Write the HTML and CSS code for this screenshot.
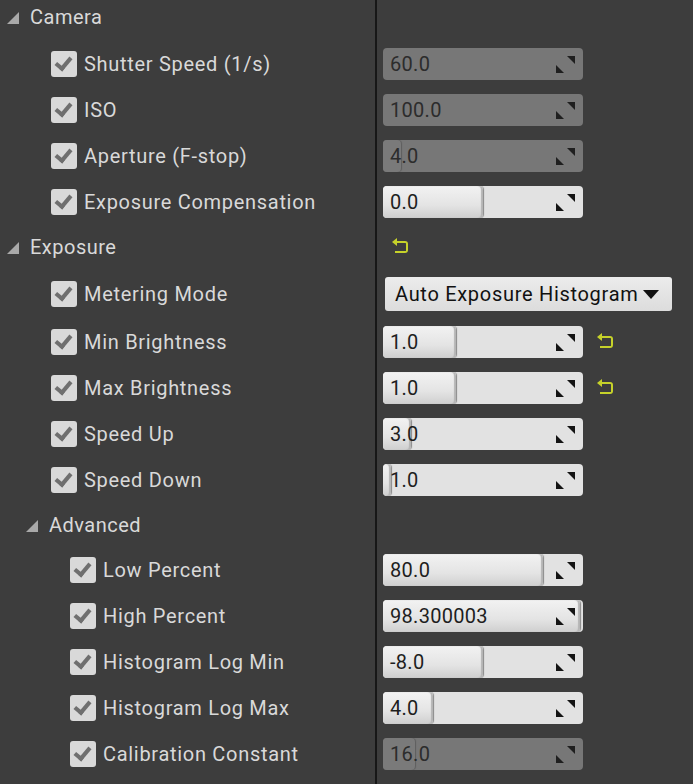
FILE: index.html
```html
<!DOCTYPE html>
<html lang="en">
<head>
  <meta charset="UTF-8" />
  <title>Post Process Settings</title>
  <link rel="stylesheet" href="styles.css">
</head>
<body>
  <div class="panel">

    <div class="row group first">
      <div class="name"><span class="arrow"></span>Camera</div>
      <div class="value"></div>
    </div>

    <div class="row">
      <div class="name"><span class="check"></span>Shutter Speed (1/s)</div>
      <div class="value"><div class="field disabled"><span class="num">60.0</span><span class="spin"></span></div></div>
    </div>
    <div class="row">
      <div class="name"><span class="check"></span>ISO</div>
      <div class="value"><div class="field disabled"><span class="num">100.0</span><span class="spin"></span></div></div>
    </div>
    <div class="row">
      <div class="name"><span class="check"></span>Aperture (F-stop)</div>
      <div class="value"><div class="field disabled"><span class="fill" style="width:9%"></span><span class="num">4.0</span><span class="spin"></span></div></div>
    </div>
    <div class="row">
      <div class="name"><span class="check"></span>Exposure Compensation</div>
      <div class="value"><div class="field"><span class="fill" style="width:50%"></span><span class="num">0.0</span><span class="spin"></span></div></div>
    </div>

    <div class="row group">
      <div class="name"><span class="arrow"></span>Exposure</div>
      <div class="value"><span class="reset head-reset"></span></div>
    </div>

    <div class="row tall">
      <div class="name"><span class="check"></span>Metering Mode</div>
      <div class="value"><div class="combo">Auto Exposure Histogram<span class="caret"></span></div></div>
    </div>
    <div class="row">
      <div class="name"><span class="check"></span>Min Brightness</div>
      <div class="value"><div class="field"><span class="fill" style="width:36.5%"></span><span class="num">1.0</span><span class="spin"></span></div><span class="reset"></span></div>
    </div>
    <div class="row">
      <div class="name"><span class="check"></span>Max Brightness</div>
      <div class="value"><div class="field"><span class="fill" style="width:36.5%"></span><span class="num">1.0</span><span class="spin"></span></div><span class="reset"></span></div>
    </div>
    <div class="row">
      <div class="name"><span class="check"></span>Speed Up</div>
      <div class="value"><div class="field"><span class="fill" style="width:14%"></span><span class="num">3.0</span><span class="spin"></span></div></div>
    </div>
    <div class="row">
      <div class="name"><span class="check"></span>Speed Down</div>
      <div class="value"><div class="field"><span class="fill" style="width:4%"></span><span class="num">1.0</span><span class="spin"></span></div></div>
    </div>

    <div class="row group sub">
      <div class="name"><span class="arrow"></span>Advanced</div>
      <div class="value"></div>
    </div>

    <div class="row sub">
      <div class="name"><span class="check"></span>Low Percent</div>
      <div class="value"><div class="field"><span class="fill" style="width:80%"></span><span class="num">80.0</span><span class="spin"></span></div></div>
    </div>
    <div class="row sub">
      <div class="name"><span class="check"></span>High Percent</div>
      <div class="value"><div class="field"><span class="fill" style="width:98.3%"></span><span class="num">98.300003</span><span class="spin"></span></div></div>
    </div>
    <div class="row sub">
      <div class="name"><span class="check"></span>Histogram Log Min</div>
      <div class="value"><div class="field"><span class="fill" style="width:50%"></span><span class="num">-8.0</span><span class="spin"></span></div></div>
    </div>
    <div class="row sub">
      <div class="name"><span class="check"></span>Histogram Log Max</div>
      <div class="value"><div class="field"><span class="fill" style="width:25%"></span><span class="num">4.0</span><span class="spin"></span></div></div>
    </div>
    <div class="row sub">
      <div class="name"><span class="check"></span>Calibration Constant</div>
      <div class="value"><div class="field disabled"><span class="fill" style="width:16%"></span><span class="num">16.0</span><span class="spin"></span></div></div>
    </div>

  </div>
</body>
</html>
```

FILE: styles.css
```css
body {
  margin: 0;
  background-color: #3d3d3d;
  font-family: Roboto, "Liberation Sans", sans-serif;
  overflow: hidden;
}

/* column splitter drawn behind the rows so it runs to the bottom */
.panel {
  display: flex;
  flex-direction: column;
  height: 784px;
  background: linear-gradient(to right, transparent 375px, #171717 375px, #171717 377px, transparent 377px);
}

.row {
  display: grid;
  grid-template-columns: 377px 1fr;
  height: 46px;
  flex: none;
}
.row.group {
  height: 44px;
}
.row.group.first {
  height: 41px;
}
.row.group.first .name,
.row.group.first .value {
  padding-bottom: 7px;
}
.row.tall {
  height: 50px;
}

.name {
  display: flex;
  align-items: center;
  padding-left: 51px;
  font-size: 20px;
  letter-spacing: 0.7px;
  color: #d9d9d9;
  white-space: nowrap;
}
.row.sub .name {
  padding-left: 70px;
}
.row.group .name {
  padding-left: 7px;
  letter-spacing: 0.5px;
}
.row.group.sub .name {
  padding-left: 26px;
}

.arrow {
  width: 0;
  height: 0;
  border-left: 12px solid transparent;
  border-bottom: 12px solid #a9a9a9;
  margin-right: 11px;
  margin-top: 1px;
}

.check {
  width: 26px;
  height: 26px;
  border-radius: 3px;
  background-color: #d9d9d9;
  margin-right: 7px;
  position: relative;
  flex: none;
}
.check::after {
  content: "";
  position: absolute;
  left: 6px;
  top: 4px;
  width: 6px;
  height: 12px;
  border-right: 4px solid #6f6f6f;
  border-bottom: 4px solid #6f6f6f;
  transform: rotate(40deg);
  transform-origin: 70% 60%;
}

.value {
  display: flex;
  align-items: center;
  padding-left: 6px;
}

.field {
  position: relative;
  display: flex;
  align-items: center;
  width: 200px;
  height: 32px;
  border-radius: 4px;
  background-color: #e2e2e2;
  overflow: hidden;
  flex: none;
}
.field .fill {
  position: absolute;
  left: 0;
  top: 0;
  bottom: 0;
  border-radius: 0 4px 4px 0;
  background: linear-gradient(#f2f2f2, #e4e4e4 60%, #cfcfcf);
  box-shadow: 1px 0 1px #8a8a8a, inset -2px 0 1px #b5b5b5;
}
.field .num {
  position: relative;
  padding-left: 7px;
  font-size: 20px;
  letter-spacing: 0.3px;
  color: #1e1e1e;
  flex: 1;
}
.field.disabled {
  background-color: #777777;
}
.field.disabled .fill {
  background: #7a7a7a;
  box-shadow: 1px 0 1px #5e5e5e;
}
.field.disabled .num {
  color: #2c2c2c;
}

.spin {
  position: relative;
  width: 19px;
  height: 17px;
  margin-right: 8px;
}
.spin::before,
.spin::after {
  content: "";
  position: absolute;
  width: 0;
  height: 0;
}
.spin::before {
  right: 0;
  top: 0;
  border-left: 8px solid transparent;
  border-top: 8px solid #141414;
}
.spin::after {
  left: 0;
  bottom: 0;
  border-right: 8px solid transparent;
  border-bottom: 8px solid #141414;
}
.field.disabled .spin::before { border-top-color: #1f1f1f; }
.field.disabled .spin::after { border-bottom-color: #1f1f1f; }

.combo {
  display: flex;
  align-items: center;
  box-sizing: border-box;
  width: 287px;
  height: 34px;
  margin-left: 2px;
  padding-left: 10px;
  border-radius: 3px;
  background: linear-gradient(#ececec, #dcdcdc);
  font-size: 20px;
  letter-spacing: 0.7px;
  color: #111;
}
.caret {
  margin-left: 5px;
  width: 0;
  height: 0;
  border-left: 8px solid transparent;
  border-right: 8px solid transparent;
  border-top: 9px solid #111;
}

.reset {
  position: relative;
  width: 13px;
  height: 12px;
  margin-left: 17px;
  box-sizing: border-box;
  border: 2.5px solid #c6d22a;
  border-left: none;
  border-radius: 0 3px 3px 0;
}
.reset::before {
  content: "";
  position: absolute;
  left: -3px;
  top: -5px;
  width: 0;
  height: 0;
  border-top: 4px solid transparent;
  border-bottom: 4px solid transparent;
  border-right: 5px solid #c6d22a;
}
.head-reset {
  margin-left: 12px;
}
```
